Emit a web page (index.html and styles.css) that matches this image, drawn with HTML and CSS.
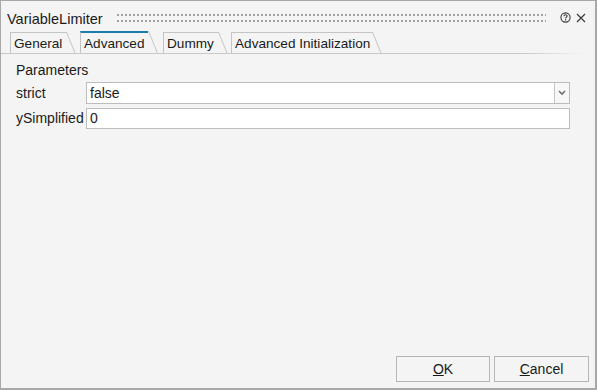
FILE: index.html
```html
<!DOCTYPE html>
<html>
<head>
<meta charset="utf-8">
<link rel="stylesheet" href="styles.css">
</head>
<body>
<div class="window">
  <div class="titlebar">
    <span class="title">VariableLimiter</span>
    <div class="grip"></div>
    <svg class="icon help" width="11" height="11" viewBox="0 0 11 11">
      <circle cx="5.5" cy="5.5" r="4.6" fill="none" stroke="#3a3a3a" stroke-width="1.1"/>
      <path d="M3.9 4.3 C3.9 3.2 4.6 2.8 5.5 2.8 C6.4 2.8 7.1 3.3 7.1 4.1 C7.1 5 5.6 5.2 5.6 6.4" fill="none" stroke="#3a3a3a" stroke-width="1.1"/>
      <rect x="5" y="7.3" width="1.2" height="1.2" fill="#3a3a3a"/>
    </svg>
    <svg class="icon close" width="10" height="10" viewBox="0 0 10 10">
      <path d="M1 1 L9 9 M9 1 L1 9" stroke="#3a3a3a" stroke-width="1.2"/>
    </svg>
  </div>
  <div class="tabs">
    <div class="tab t-general">General</div>
    <div class="tab active t-advanced">Advanced</div>
    <div class="tab t-dummy">Dummy</div>
    <div class="tab t-init">Advanced Initialization</div>
  </div>
  <div class="panel">
    <div class="section">Parameters</div>
    <div class="form">
      <label class="label">strict</label>
      <div class="combo">
        <span class="value">false</span>
        <span class="drop">
          <svg width="8" height="6" viewBox="0 0 8 6"><path d="M1 1 L4 4 L7 1" fill="none" stroke="#707070" stroke-width="1.6"/></svg>
        </span>
      </div>
      <label class="label">ySimplified</label>
      <div class="input"><span class="value">0</span></div>
    </div>
  </div>
  <div class="footer">
    <button class="btn ok"><u>O</u>K</button>
    <button class="btn cancel"><u>C</u>ancel</button>
  </div>
</div>
</body>
</html>
```

FILE: styles.css
```css
html, body {
  margin: 0;
  padding: 0;
  background: #ffffff;
}

.window {
  width: 597px;
  height: 390px;
  box-sizing: border-box;
  background: #f4f4f4;
  border-top: 1px solid #a8a8a8;
  border-left: 1px solid #a8a8a8;
  border-right: 2px solid #a8a8a8;
  border-bottom: 2px solid #a8a8a8;
  display: flex;
  flex-direction: column;
  font-family: "Liberation Sans", Arial, sans-serif;
  color: #1a1a1a;
}

.titlebar {
  height: 30px;
  box-sizing: border-box;
  padding: 10px 0 0 6px;
  display: flex;
  align-items: flex-start;
}

.title {
  font-size: 14.5px;
  line-height: 17px;
}

.grip {
  flex: 1;
  height: 8px;
  margin: 3px 14px 0 14px;
  background-image:
    linear-gradient(to right, #a0a0a0 2px, transparent 2px),
    linear-gradient(to right, #a0a0a0 2px, transparent 2px);
  background-size: 4px 2px, 4px 2px;
  background-position: 0 0, 0 6px;
  background-repeat: repeat-x, repeat-x;
}

.icon {
  display: block;
}

.help {
  margin-top: 1px;
}

.close {
  margin: 2px 9px 0 5px;
}

.tabs {
  height: 23px;
  box-sizing: border-box;
  display: flex;
  align-items: flex-end;
  padding: 0 0 1px 9px;
  background: linear-gradient(to right, #c9c9c9 0%, #c9c9c9 88%, rgba(201,201,201,0) 98%) left bottom / 100% 1px no-repeat;
}

.tab {
  position: relative;
  box-sizing: border-box;
  height: 21px;
  border-top: 1px solid #c4c4c4;
  border-left: 1px solid #c4c4c4;
  padding: 2px 0 0 3px;
  font-size: 13.6px;
  line-height: 17px;
  white-space: nowrap;
}

.tab::after {
  content: "";
  position: absolute;
  top: -1px;
  bottom: 0;
  left: 100%;
  border-left: 1px solid #c4c4c4;
  transform: skewX(22deg);
  transform-origin: top left;
}

.tab.active {
  height: 22px;
  border-top: 2px solid #1b7dab;
  padding-top: 2px;
}

.tab.active::after {
  top: -2px;
}

.t-general { width: 56px; margin-right: 14px; }
.t-advanced { width: 68px; margin-right: 15px; }
.t-dummy { width: 55px; margin-right: 13px; }
.t-init { width: 141px; }

.panel {
  flex: 1;
  padding: 8px 25px 0 15px;
}

.section {
  font-size: 14px;
  line-height: 17px;
  margin-bottom: 3px;
}

.form {
  display: grid;
  grid-template-columns: 70px 1fr;
  row-gap: 4px;
  align-items: center;
}

.label {
  font-size: 14px;
  line-height: 17px;
}

.combo, .input {
  box-sizing: border-box;
  background: #ffffff;
  border: 1px solid #bcbcbc;
  display: flex;
  align-items: center;
  font-size: 14px;
  line-height: 17px;
}

.combo {
  height: 22px;
}

.input {
  height: 21px;
}

.value {
  flex: 1;
  padding-left: 3px;
}

.drop {
  width: 14px;
  height: 100%;
  border-left: 1px solid #c4c4c4;
  background: #f7f7f7;
  display: flex;
  align-items: center;
  justify-content: center;
}

.drop svg {
  display: block;
}

.footer {
  display: flex;
  justify-content: flex-end;
  gap: 4px;
  padding: 0 6px 6px 0;
}

.btn {
  box-sizing: border-box;
  height: 26px;
  border: 1px solid #b6b6b6;
  background: #f4f4f4;
  font-family: "Liberation Sans", Arial, sans-serif;
  font-size: 14px;
  color: #1a1a1a;
  padding: 0;
}

.ok { width: 94px; }
.cancel { width: 95px; }
```
